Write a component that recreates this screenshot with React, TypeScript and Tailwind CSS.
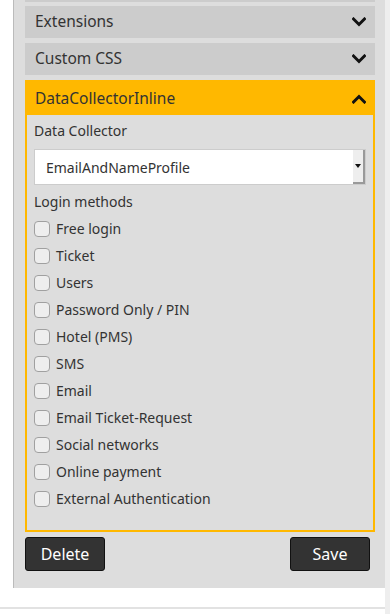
import React from 'react';

const methods = [
  'Free login',
  'Ticket',
  'Users',
  'Password Only / PIN',
  'Hotel (PMS)',
  'SMS',
  'Email',
  'Email Ticket-Request',
  'Social networks',
  'Online payment',
  'External Authentication',
];

const Chevron: React.FC<{ up?: boolean }> = ({ up }) => (
  <svg width="14" height="10" viewBox="0 0 14 10" className="shrink-0">
    <polyline
      points={up ? '1.5,8 7,2.5 12.5,8' : '1.5,2 7,7.5 12.5,2'}
      fill="none"
      stroke="#111"
      strokeWidth="3"
      strokeLinecap="square"
    />
  </svg>
);

const SectionHeader: React.FC<{ title: string }> = ({ title }) => (
  <div className="h-[32px] bg-[#cccccc] flex items-center justify-between pl-[10px] pr-[9px]">
    <span className="text-[15.5px] text-[#333]">{title}</span>
    <Chevron />
  </div>
);

export default function App() {
  return (
    <div className="min-h-[614px] bg-white flex" style={{ fontFamily: '"Noto Sans", "Open Sans", sans-serif' }}>
      <div className="w-[385px] flex flex-col">
        <div className="ml-[13px] border-l border-[#bbbbbb] bg-[#dddddd] pl-[11px] pr-[10px] pb-[17px]">
          <div className="h-[2px] bg-[#cccccc]" />
          <div className="flex flex-col gap-[5px] mt-[4px]">
            <SectionHeader title="Extensions" />
            <SectionHeader title="Custom CSS" />
            <div className="border-2 border-[#ffb800]">
              <div className="h-[33px] bg-[#ffb800] flex items-center justify-between pl-[8px] pr-[7px]">
                <span className="text-[15.5px] text-[#333]">DataCollectorInline</span>
                <Chevron up />
              </div>
              <div className="px-[7px] pt-[5px] pb-[18px] text-[14px] text-[#333]">
                <div className="h-[20px] flex items-center">Data Collector</div>
                <div className="mt-[9px] h-[36px] bg-white border border-[#cccccc] flex items-center justify-between">
                  <span className="pl-[11px]">EmailAndNameProfile</span>
                  <div className="h-full w-[12px] bg-[#eeeeee] border-r-2 border-b-2 border-[#999] flex items-center justify-center">
                    <svg width="6" height="4" viewBox="0 0 6 4">
                      <polygon points="0,0 6,0 3,4" fill="#111" />
                    </svg>
                  </div>
                </div>
                <div className="mt-[6px] h-[20px] flex items-center">Login methods</div>
                <div className="mt-[4px] flex flex-col">
                  {methods.map((m) => (
                    <label key={m} className="h-[27px] flex items-center gap-[6px]">
                      <span className="w-[16px] h-[16px] rounded-[4px] border border-[#a0a0a0] bg-[#eeeeee]" />
                      <span>{m}</span>
                    </label>
                  ))}
                </div>
              </div>
            </div>
          </div>
          <div className="mt-[5px] flex justify-between pr-[5px]">
            <button className="w-[80px] h-[34px] bg-[#333333] border border-[#111] rounded-[3px] text-white text-[16px]">
              Delete
            </button>
            <button className="w-[80px] h-[34px] bg-[#333333] border border-[#111] rounded-[3px] text-white text-[16px]">
              Save
            </button>
          </div>
        </div>
        <div className="mt-[19px] border-t-2 border-[#e2e2e2]" />
      </div>
      <div className="w-[5px] bg-[#eeeeee]" />
    </div>
  );
}
